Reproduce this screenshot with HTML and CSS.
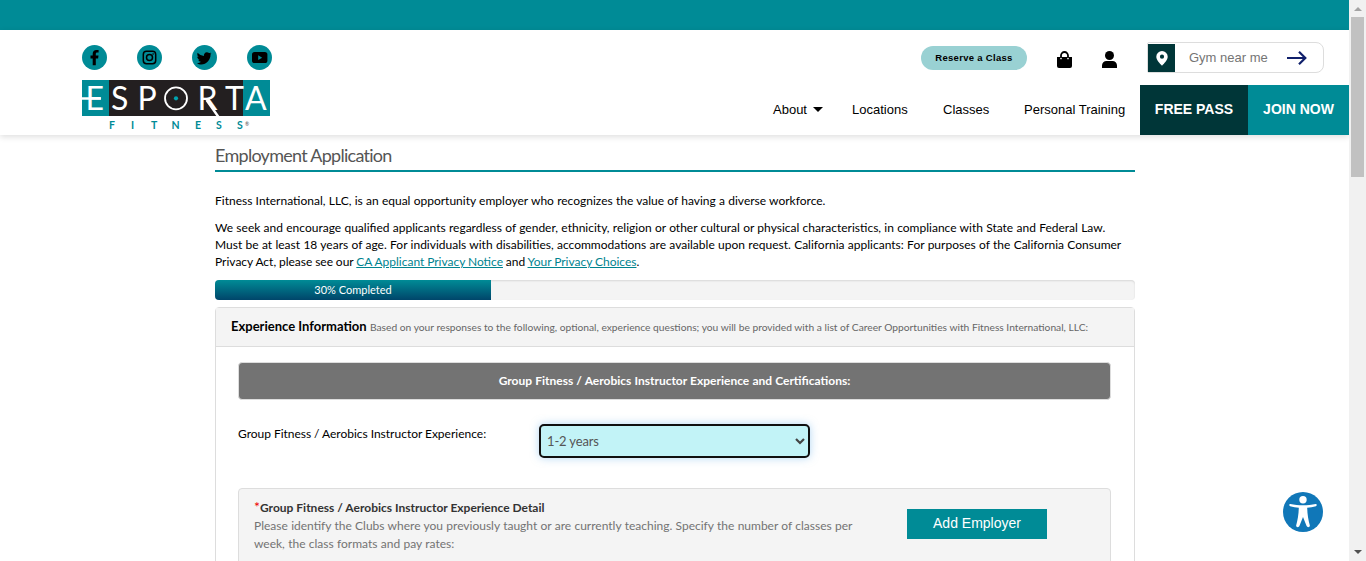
FILE: index.html
```html
<!DOCTYPE html>
<html lang="en">
<head>
<meta charset="utf-8">
<title>Employment Application</title>
<link rel="stylesheet" href="styles.css">
</head>
<body>
<div class="page">
  <div class="topbar"></div>
  <header class="header">
    <div class="brand">
      <div class="social">
        <svg class="round" viewBox="0 0 25 25"><circle cx="12.5" cy="12.5" r="12.5"/><path class="ink" d="M10.700 20.200v-6.700H8.500v-3h2.200V8.800C10.700 6.300 12.100 4.900 14.400 4.900c1.100 0 2.200.2 2.200.2v2.500h-1.300c-1.200 0-1.500.7-1.500 1.400v1.500h2.700l-.4 3h-2.300v6.700z"/></svg>
        <svg class="round" viewBox="0 0 25 25"><circle cx="12.5" cy="12.5" r="12.500"/><rect class="line" x="6.300" y="6.300" width="12.400" height="12.400" rx="3.200"/><circle class="line" cx="12.500" cy="12.500" r="3"/><circle class="ink" cx="16.100" cy="9" r=".8"/></svg>
        <svg class="round" viewBox="0 0 25 25"><circle cx="12.500" cy="12.500" r="12.500"/><path class="ink" transform="translate(-.9 -.9) scale(1.070)" d="M18.200 9.500c.1 5.500-4 9.500-8.600 9.500-1.500 0-3-.4-4.200-1.200 1.500.1 2.900-.3 4-1.200-1.200 0-2.300-.8-2.600-2h1.200c-1.300-.3-2.300-1.400-2.300-2.900.4.200.8.300 1.300.3-1.200-.8-1.600-2.500-.8-3.800 1.400 1.700 3.500 2.800 5.800 2.900-.6-2.700 2.500-4.900 4.800-2.700.7-.1 1.200-.3 1.800-.6-.2.700-.6 1.200-1.200 1.500.6-.1 1.100-.2 1.600-.4-.3.400-.6.800-.8.600z"/></svg>
        <svg class="round" viewBox="0 0 25 25"><circle cx="12.500" cy="12.500" r="12.500"/><rect class="ink" x="5" y="7.100" width="15.400" height="11" rx="2.600"/><path d="M11.200 10.300v4.700l4-2.350z"/></svg>
      </div>
      <svg class="logo" viewBox="0 0 188 52" width="188" height="52">
        <path fill="#008b96" d="M0 0h188v36H0z"/><path fill="#231f20" d="M27 0h134v36H27z"/>
        <g class="word"><text x="3.500" y="30">E</text><text x="29" y="30">S</text><text x="55.500" y="30">P</text><text x="115.500" y="30">R</text><text x="143" y="30">T</text><text x="163" y="30">A</text></g>
        <circle cx="94" cy="18.300" r="11" fill="none" stroke="#fff" stroke-width="1.800"/><circle cx="94" cy="18.300" r="2.100" fill="#00a4b0"/>
        <path d="M0 18.500h19M124.500 20l12 17" stroke="#fff" stroke-width="2.400"/>
        <g class="sub"><text x="27" y="49">F</text><text x="49" y="49">I</text><text x="69" y="49">T</text><text x="89.500" y="49">N</text><text x="113" y="49">E</text><text x="134" y="49">S</text><text x="155" y="49">S</text></g>
        <text class="reg" x="163" y="46">®</text>
      </svg>
    </div>
    <div class="side">
      <div class="tools">
        <a class="reserve">Reserve a Class</a>
        <svg class="bag" viewBox="0 0 15 18" width="15" height="18"><path d="M0 6h15v9a2 2 0 0 1-2 2H2a2 2 0 0 1-2-2z"/><path d="M4 7V4.500a3.500 3.500 0 0 1 7 0V7" fill="none" stroke="#000" stroke-width="1.800"/><circle cx="4" cy="7.600" r=".8" fill="#fff"/><circle cx="11" cy="7.600" r=".8" fill="#fff"/></svg>
        <svg class="user" viewBox="0 0 15 18" width="15" height="18"><circle cx="7.500" cy="4.500" r="4.500"/><path d="M0 17v-2.500A4.500 4.500 0 0 1 4.500 10h6a4.500 4.500 0 0 1 4.500 4.500V17z"/></svg>
        <div class="search">
          <span class="pin"><svg viewBox="0 0 12 15" width="12" height="15"><path fill="#fff" fill-rule="evenodd" d="M6 0a5.700 5.700 0 0 1 5.700 5.700C11.700 9 8 12.500 6 14.700 4 12.500.3 9 .3 5.700A5.700 5.700 0 0 1 6 0zm0 3.600a2.100 2.100 0 1 0 0 4.200 2.100 2.100 0 0 0 0-4.200z"/></svg></span>
          <span class="near">Gym near me</span>
          <svg class="go" viewBox="0 0 20 14" width="20" height="14"><path d="M0 7h18M12 .8L18.300 7 12 13.200" fill="none" stroke="#10206b" stroke-width="2.200"/></svg>
        </div>
      </div>
      <nav class="nav">
        <a class="about">About <i class="caret"></i></a><a class="loc">Locations</a><a class="cls">Classes</a><a class="pt">Personal Training</a>
        <a class="cta pass">FREE PASS</a><a class="cta join">JOIN NOW</a>
      </nav>
    </div>
  </header>
  <main class="main">
    <h1 class="title"><span class="t-title">Employment Application</span></h1>
    <p class="intro"><span class="t-p1">Fitness International, LLC, is an equal opportunity employer who recognizes the value of having a diverse workforce.</span></p>
    <p class="legal"><span class="t-a">We seek and encourage qualified applicants regardless of gender, ethnicity, religion or other cultural or physical characteristics, in compliance with State and Federal Law.</span><br><span class="t-b">Must be at least 18 years of age. For individuals with disabilities, accommodations are available upon request. California applicants: For purposes of the California Consumer</span><br><span class="t-c">Privacy Act, please see our <a class="link">CA Applicant Privacy Notice</a> and <a class="link">Your Privacy Choices</a>.</span></p>
    <div class="progress"><div class="bar" style="width:30%"><span>30% Completed</span></div></div>
    <section class="panel">
      <div class="panel-head"><b class="t-exp">Experience Information</b><span class="t-sub">Based on your responses to the following, optional, experience questions; you will be provided with a list of Career Opportunities with Fitness International, LLC:</span></div>
      <div class="panel-body">
        <div class="banner"><span>Group Fitness / Aerobics Instructor Experience and Certifications:</span></div>
        <div class="field">
          <label class="label"><span>Group Fitness / Aerobics Instructor Experience:</span></label>
          <div class="select"><span>1-2 years</span><svg viewBox="0 0 10 7" width="10" height="7"><path d="M1 1l4 4 4-4" fill="none" stroke="#444" stroke-width="2.200"/></svg></div>
        </div>
        <div class="well">
          <div class="copy">
            <div><span class="star">*</span><b class="t-det">Group Fitness / Aerobics Instructor Experience Detail</b></div>
            <div class="t-w1">Please identify the Clubs where you previously taught or are currently teaching. Specify the number of classes per</div>
            <div class="t-w2">week, the class formats and pay rates:</div>
          </div>
          <a class="button">Add Employer</a>
        </div>
      </div>
    </section>
  </main>
</div>
<div class="scroll"><i class="up"></i><i class="thumb"></i><i class="down"></i></div>
<svg class="access" viewBox="0 0 40 40"><circle cx="20" cy="20" r="20" fill="#1077b8"/><circle cx="20" cy="7.800" r="3.700" fill="#fff"/><path fill="#fff" d="M7.300 12c4 .9 8.500 1.300 12.700 1.300s8.700-.4 12.700-1.300c1.200-.2 1.400 1.900.2 2.200-2.800.7-6 1.200-8.700 1.500.1 6.300 1.200 12.700 2.600 17.500.6 2-2.400 2.800-3.200.9L20 25l-3.600 9.100c-.8 1.900-3.800 1.100-3.200-.9 1.400-4.800 2.500-11.200 2.600-17.500-2.700-.3-5.900-.8-8.700-1.500-1.200-.3-1-2.400.2-2.200z"/></svg>
</body>
</html>
```
FILE: styles.css
```css
* { box-sizing: border-box; }
body { margin: 0; height: 561px; overflow: hidden; display: flex; background: #fff; color: #000; font-family: "Liberation Sans", Arial, sans-serif; }
.page { width: 1349px; height: 561px; overflow: hidden; flex: none; }
.topbar { height: 30px; background: #008b96; }
.header { height: 105px; display: flex; justify-content: space-between; box-shadow: 0 2px 6px rgba(0,0,0,.13); background: #fff; }
.brand { padding: 15px 0 0 82px; }
.social { display: flex; gap: 30px; }
.round { width: 25px; height: 25px; fill: #008b96; }
.round .ink { fill: #000; }
.round .line { fill: none; stroke: #000; stroke-width: 1.500; }
.logo { display: block; margin-top: 10px; overflow: visible; }
.word { font: 32px Lato, sans-serif; fill: #fff; }
.sub { font: bold 10.500px Lato, sans-serif; fill: #008b96; }
.reg { font: 5px Lato, sans-serif; fill: #444; }
.side { display: flex; flex-direction: column; }
.tools { height: 55px; display: flex; align-items: flex-start; justify-content: flex-end; padding: 12px 25px 0 0; }
.reserve { width: 106px; height: 24px; margin-top: 4px; border-radius: 12px; background: #99d1d3; font-size: 9.500px; font-weight: bold; line-height: 24px; text-align: center; letter-spacing: .3px; white-space: nowrap; }
.bag { margin: 9px 0 0 30px; }
.user { margin: 9px 0 0 30px; }
.search { width: 177px; height: 31px; margin-left: 30px; border: 1px solid #ddd; border-radius: 2px 8px 8px 2px; display: flex; align-items: center; }
.pin { width: 27px; height: 28px; margin-top: 1px; background: #003638; display: flex; align-items: center; justify-content: center; }
.near { margin-left: 14px; width: 98px; font-size: 13px; color: #757575; white-space: nowrap; }
.nav { height: 50px; display: flex; line-height: 49px; font-size: 13px; white-space: nowrap; }
.about { width: 79px; }
.loc { width: 91px; }
.cls { width: 81px; }
.pt { width: 116px; }
.caret { display: inline-block; border: 5px solid transparent; border-top-color: #000; border-bottom: 0; margin-left: 2px; vertical-align: 2px; }
.cta { color: #fff; font-weight: bold; text-align: center; font-size: 14px; line-height: 48px; }
.pass { width: 108px; background: #003638; }
.join { width: 101px; background: #008b96; }
.main { width: 920px; margin-left: 215px; font: 12px/17px Lato, Carlito, Calibri, sans-serif; white-space: nowrap; }
.title { margin: 0; height: 37px; border-bottom: 2px solid #008b96; font-size: 18px; font-weight: 400; line-height: 40px; color: #555; letter-spacing: -.720px; }
.intro { margin: 20px 0 10px; word-spacing: .180px; }
.legal { margin: 0 0 10px; }
.t-a { word-spacing: .210px; }
.t-b { word-spacing: .250px; }
.t-c { word-spacing: -.250px; }
.link { color: #00838f; text-decoration: underline; }
.progress { height: 20px; margin-bottom: 7px; background: #f4f4f4; border-radius: 4px; box-shadow: inset 0 1px 2px rgba(0,0,0,.12); overflow: hidden; }
.bar { height: 20px; background: linear-gradient(#008b96, #00456a); color: #fff; font-size: 11px; line-height: 20px; text-align: center; }
.panel { border: 1px solid #ddd; border-radius: 4px; height: 300px; }
.panel-head { height: 39px; border-bottom: 1px solid #ddd; background: #f4f4f4; padding-left: 15px; line-height: 37px; display: flex; align-items: baseline; }
.t-exp { width: 139px; font-size: 13px; }
.t-sub { font-size: 10.240px; color: #666; }
.panel-body { padding: 15px 23px 0 22px; }
.banner { height: 38px; border: 1px solid #ddd; border-radius: 4px; background: #737373; color: #fff; font-weight: bold; line-height: 35px; text-align: center; word-spacing: .200px; }
.field { height: 88px; display: flex; padding-top: 24px; }
.label { width: 301px; line-height: 19px; word-spacing: -.200px; }
.select { width: 271px; height: 34px; border: 2px solid #101010; border-radius: 5px; background: #c2f3f7; box-shadow: 0 0 8px rgba(102,175,233,.5); display: flex; align-items: center; justify-content: space-between; padding: 0 3px 0 6px; font-size: 13px; letter-spacing: -.150px; color: #555; }
.well { height: 120px; border: 1px solid #ddd; border-radius: 4px; background: #f4f4f4; display: flex; padding: 10px 15px; line-height: 18px; color: #737373; }
.copy { width: 653px; }
.t-det { color: #333; }
.t-w1 { word-spacing: .220px; }
.t-w2 { word-spacing: .250px; }
.star { display: inline-block; width: 6px; font-size: 14px; line-height: 12px; color: #e00; }
.button { width: 140px; height: 30px; margin-top: 10px; background: #008b96; color: #fff; font: 14px/29px "Liberation Sans", Arial, sans-serif; text-align: center; }
.scroll { width: 17px; height: 561px; background: #f1f1f1; display: flex; flex-direction: column; align-items: center; }
.up { border: 4px solid transparent; border-top: 0; border-bottom-color: #a3a3a3; margin-top: 7px; }
.thumb { width: 13px; height: 160px; margin-top: 6px; background: #c1c1c1; }
.down { border: 4px solid transparent; border-bottom: 0; border-top-color: #505050; margin: auto 0 7px; }
.access { position: absolute; left: 1283px; top: 492px; width: 40px; height: 40px; }
```
